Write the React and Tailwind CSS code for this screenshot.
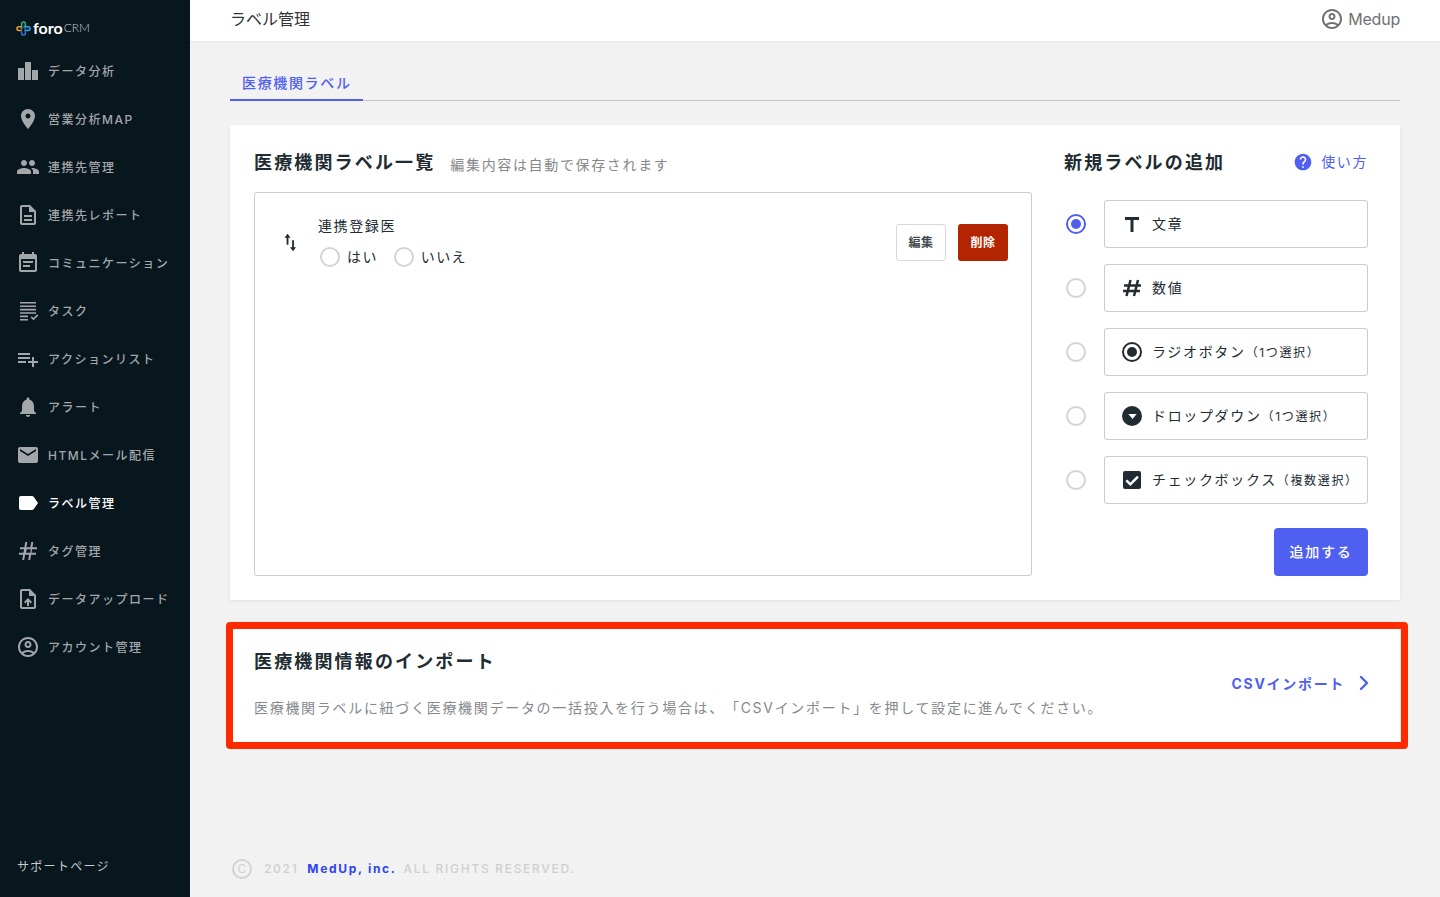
import { ChevronRight } from 'lucide-react';

const icons = {
  place: 'M12 2C8.13 2 5 5.13 5 9c0 5.25 7 13 7 13s7-7.75 7-13c0-3.87-3.13-7-7-7zm0 9.5c-1.38 0-2.5-1.12-2.5-2.5s1.12-2.5 2.5-2.5 2.5 1.12 2.5 2.5-1.12 2.5-2.5 2.5z',
  people: 'M16 11c1.66 0 2.99-1.34 2.99-3S17.66 5 16 5c-1.66 0-3 1.34-3 3s1.34 3 3 3zm-8 0c1.66 0 2.99-1.34 2.99-3S9.66 5 8 5C6.34 5 5 6.34 5 8s1.34 3 3 3zm0 2c-2.33 0-7 1.17-7 3.5V19h14v-2.5c0-2.33-4.67-3.5-7-3.5zm8 0c-.29 0-.62.02-.97.05 1.16.84 1.97 1.97 1.97 3.45V19h6v-2.5c0-2.33-4.67-3.5-7-3.5z',
  report: 'M8 16h8v2H8zm0-4h8v2H8zm6-10H6c-1.1 0-2 .9-2 2v16c0 1.1.89 2 1.99 2H18c1.1 0 2-.9 2-2V8l-6-6zm4 18H6V4h7v5h5v11z',
  event: 'M17 10H7v2h10v-2zm2-7h-1V1h-2v2H8V1H6v2H5c-1.11 0-1.99.9-1.99 2L3 19c0 1.1.89 2 2 2h14c1.1 0 2-.9 2-2V5c0-1.1-.9-2-2-2zm0 16H5V8h14v11zm-5-5H7v2h7v-2z',
  chart: 'M2 9h6v12H2zM9 3h6v18H9zM16 11h6v10h-6z',
  task: 'M4 3h16v1.6H4zM4 6.4h16V8H4zM4 9.8h16v1.6H4zM4 13.2h16v1.6H4zM4 16.6h8v1.6H4zM4 20h8v1.6H4zM14.6 18.4l1.2-1.2 1.7 1.7 3.6-3.6 1.2 1.2-4.8 4.8z',
  playlist: 'M14 10H2v2h12v-2zm0-4H2v2h12V6zm4 8v-4h-2v4h-4v2h4v4h2v-4h4v-2h-4zM2 16h8v-2H2v2z',
  bell: 'M12 22c1.1 0 2-.9 2-2h-4c0 1.1.89 2 2 2zm6-6v-5c0-3.07-1.64-5.64-4.5-6.32V4c0-.83-.67-1.5-1.5-1.5s-1.5.67-1.5 1.5v.68C7.63 5.36 6 7.92 6 11v5l-2 2v1h16v-1l-2-2z',
  mail: 'M20 4H4c-1.1 0-1.99.9-1.99 2L2 18c0 1.1.9 2 2 2h16c1.1 0 2-.9 2-2V6c0-1.1-.9-2-2-2zm0 4l-8 5-8-5V6l8 5 8-5v2z',
  label: 'M17.63 5.84C17.27 5.33 16.67 5 16 5L5 5.01C3.9 5.01 3 5.9 3 7v10c0 1.1.9 1.99 2 1.99L16 19c.67 0 1.27-.33 1.63-.84L22 12l-4.37-6.16z',
  tag: 'M9.3 3h2l-.9 5.2h4L15.3 3h2l-.9 5.2H21v2h-4.9l-.7 3.6H20v2h-4.9L14.2 21h-2l.9-5.2h-4L8.2 21h-2l.9-5.2H3v-2h4.4l.7-3.6H4v-2h4.4z M10.8 10.2l-.7 3.6h4l.7-3.6z',
  upload: 'M14 2H6c-1.1 0-1.99.9-1.99 2L4 20c0 1.1.89 2 1.99 2H18c1.1 0 2-.9 2-2V8l-6-6zm4 18H6V4h7v5h5v11zM8 15.01l1.41 1.41L11 14.84V19h2v-4.16l1.59 1.59L16 15.01 12.01 11 8 15.01z',
  account: 'M12 2C6.48 2 2 6.48 2 12s4.48 10 10 10 10-4.48 10-10S17.52 2 12 2zM7.35 18.5C8.66 17.56 10.26 17 12 17s3.34.56 4.65 1.5c-1.31.94-2.91 1.5-4.65 1.5s-3.34-.56-4.65-1.5zm10.79-1.38C16.45 15.8 14.32 15 12 15s-4.45.8-6.14 2.12C4.7 15.73 4 13.95 4 12c0-4.42 3.58-8 8-8s8 3.58 8 8c0 1.95-.7 3.73-1.86 5.12zM12 6c-1.93 0-3.5 1.57-3.5 3.5S10.07 13 12 13s3.5-1.57 3.5-3.5S13.93 6 12 6zm0 5c-.83 0-1.5-.67-1.5-1.5S11.17 8 12 8s1.5.67 1.5 1.5S12.83 11 12 11z',
  help: 'M12 2C6.48 2 2 6.48 2 12s4.48 10 10 10 10-4.48 10-10S17.52 2 12 2zm1 17h-2v-2h2v2zm2.07-7.75l-.9.92C13.45 12.9 13 13.5 13 15h-2v-.5c0-1.1.45-2.1 1.17-2.83l1.24-1.26c.37-.36.59-.86.59-1.41 0-1.1-.9-2-2-2s-2 .9-2 2H8c0-2.21 1.79-4 4-4s4 1.79 4 4c0 .88-.36 1.68-.93 2.25z',
};

const navItems = [
  { label: 'データ分析', icon: 'chart' },
  { label: '営業分析MAP', icon: 'place' },
  { label: '連携先管理', icon: 'people' },
  { label: '連携先レポート', icon: 'report' },
  { label: 'コミュニケーション', icon: 'event' },
  { label: 'タスク', icon: 'task' },
  { label: 'アクションリスト', icon: 'playlist' },
  { label: 'アラート', icon: 'bell' },
  { label: 'HTMLメール配信', icon: 'mail' },
  { label: 'ラベル管理', icon: 'label', active: true },
  { label: 'タグ管理', icon: 'tag' },
  { label: 'データアップロード', icon: 'upload' },
  { label: 'アカウント管理', icon: 'account' },
];

function Icon({ name, className }) {
  return (
    <svg viewBox="0 0 24 24" fill="currentColor" fillRule="evenodd" className={className}>
      <path d={icons[name]} />
    </svg>
  );
}

function Logo() {
  return (
    <div className="flex items-center h-[16px]">
      <svg viewBox="0 0 16 16" fill="none" strokeWidth="1.6" className="w-[15px] h-[15px] shrink-0">
        <path d="M6.5 6H3a2 2 0 0 0 0 4h3" stroke="#f39a2d" />
        <path d="M6 9V3a2 2 0 0 1 4 0v3" stroke="#3fb27f" />
        <path d="M8 6h5a2 2 0 0 1 0 4H9" stroke="#2aa6df" />
        <path d="M10 7v6a2 2 0 0 1-4 0v-2" stroke="#2f6fd6" />
      </svg>
      <span className="ml-[2px] text-[16px] leading-none font-bold text-white font-['Lato',sans-serif]">foro</span>
      <span className="ml-[1px] text-[12px] leading-none font-light text-[#c9cdd0] font-['Lato',sans-serif]">CRM</span>
    </div>
  );
}

function Sidebar() {
  return (
    <aside className="w-[190px] shrink-0 bg-[#08161e] flex flex-col h-full">
      <div className="h-[47px] pl-[16px] pt-[20px]">
        <Logo />
      </div>
      <nav>
        {navItems.map((item) => (
          <div
            key={item.label}
            className={`h-12 pl-[16px] flex items-center gap-[8px] text-[12px] tracking-[1.5px] font-medium ${
              item.active ? 'text-white' : 'text-[#a3a7aa]'
            }`}
          >
            <Icon name={item.icon} className="w-6 h-6 shrink-0" />
            <span className="pt-[2px]">{item.label}</span>
          </div>
        ))}
      </nav>
      <div className="mt-auto pl-[17px] pb-[21px] text-[12px] leading-[18px] tracking-[1.3px] text-[#c9cdd0]">
        サポートページ
      </div>
    </aside>
  );
}

function Radio({ checked }) {
  return (
    <span
      className={`w-5 h-5 rounded-full border-2 shrink-0 flex items-center justify-center bg-white ${
        checked ? 'border-[#4f5ff0]' : 'border-[#d0d5d5]'
      }`}
    >
      {checked && <span className="w-[10px] h-[10px] rounded-full bg-[#4f5ff0]" />}
    </span>
  );
}

const typeIcons = {
  text: (
    <svg viewBox="0 0 24 24" fill="#212c32" className="w-6 h-6">
      <path d="M5 5h14v3h-5.5v12h-3V8H5z" />
    </svg>
  ),
  number: (
    <svg viewBox="0 0 24 24" fill="none" stroke="#212c32" strokeWidth="2.5" className="w-6 h-6">
      <path d="M10.5 4 6.5 20M18 4l-4 16M4 9.5h17M3 15h17" />
    </svg>
  ),
  radio: (
    <span className="w-5 h-5 rounded-full border-2 border-[#212c32] flex items-center justify-center">
      <span className="w-[10px] h-[10px] rounded-full bg-[#212c32]" />
    </span>
  ),
  dropdown: (
    <span className="w-5 h-5 rounded-full bg-[#212c32] flex items-center justify-center">
      <svg viewBox="0 0 10 6" fill="white" className="w-[9px] h-[5px]">
        <path d="M0 0h10L5 6z" />
      </svg>
    </span>
  ),
  checkbox: (
    <span className="w-[18px] h-[18px] rounded-[2px] bg-[#212c32] flex items-center justify-center">
      <svg viewBox="0 0 24 24" fill="none" stroke="white" strokeWidth="3.8" className="w-[16px] h-[16px]">
        <path d="M3.5 12.5 9.5 18.5 21 7" />
      </svg>
    </span>
  ),
};

const labelTypes = [
  { type: 'text', label: '文章', checked: true },
  { type: 'number', label: '数値' },
  { type: 'radio', label: 'ラジオボタン', note: '（1つ選択）' },
  { type: 'dropdown', label: 'ドロップダウン', note: '（1つ選択）' },
  { type: 'checkbox', label: 'チェックボックス', note: '（複数選択）' },
];

function NewLabelPanel() {
  return (
    <div className="w-[304px] shrink-0 flex flex-col">
      <div className="h-[24px] flex items-center justify-between">
        <h2 className="text-[18px] leading-[24px] font-bold tracking-[2.15px] text-[#212c32]">新規ラベルの追加</h2>
        <div className="flex items-center gap-[8px] text-[14px] tracking-[1.6px] text-[#4f5ff0] -mt-[3px]">
          <Icon name="help" className="w-5 h-5" />
          使い方
        </div>
      </div>
      <div className="mt-[25px] flex flex-col gap-4">
        {labelTypes.map((t) => (
          <div key={t.type} className="flex items-center">
            <span className="w-[40px] pl-[2px] shrink-0">
              <Radio checked={t.checked} />
            </span>
            <div className="flex-1 h-12 border border-[#ccc] rounded-[3px] pl-[15px] flex items-center gap-[8px] text-[14px] tracking-[1.65px] text-[#212c32]">
              <span className="w-6 h-6 flex items-center justify-center shrink-0">{typeIcons[t.type]}</span>
              <span className="pb-[2px]">
                {t.label}
                {t.note && <span className="text-[12px]">{t.note}</span>}
              </span>
            </div>
          </div>
        ))}
      </div>
      <div className="mt-6 flex justify-end">
        <button className="w-[94px] h-12 pb-[2px] rounded-[4px] bg-[#4f5ff0] text-white text-[14px] font-medium tracking-[1.7px]">
          追加する
        </button>
      </div>
    </div>
  );
}

function LabelRow() {
  return (
    <div className="flex items-start pt-[31px] pl-[24px] pr-[23px]">
      <svg viewBox="0 0 24 24" fill="#212c32" className="w-[22px] h-[22px] mt-[7px] shrink-0">
        <path d="M9.3 3l-3.3 4.4h2.3V15h2V7.4h2.3zM15.3 22l3.3-4.4h-2.3V10h-2v7.6H12z" />
      </svg>
      <div className="ml-[17px] flex-1 -mt-[8px]">
        <div className="text-[14px] leading-[20px] tracking-[1.6px] text-[#212c32]">連携登録医</div>
        <div className="mt-[10px] flex items-center text-[14px] tracking-[1.4px] text-[#212c32] ml-[2px]">
          <Radio />
          <span className="ml-[7px]">はい</span>
          <span className="ml-[16px]"><Radio /></span>
          <span className="ml-[7px]">いいえ</span>
        </div>
      </div>
      <div className="flex gap-3">
        <button className="w-[50px] h-[37px] rounded-[3px] border border-[#d8d8d8] bg-white text-[12px] font-bold tracking-[0.05em] text-[#42494e]">
          編集
        </button>
        <button className="w-[50px] h-[37px] rounded-[3px] bg-[#b32400] text-white text-[12px] font-bold tracking-[0.05em]">
          削除
        </button>
      </div>
    </div>
  );
}

function ImportCard() {
  return (
    <section className="relative mt-6 bg-white h-[120px] px-6 pt-[26px] flex justify-between shadow-[0_1px_3px_rgba(0,0,0,0.08)]">
      <div>
        <h2 className="text-[18px] leading-[24px] font-bold tracking-[2.15px] text-[#212c32]">医療機関情報のインポート</h2>
        <p className="mt-[24px] text-[14px] leading-[20px] tracking-[1.7px] text-[#85898c]">
          医療機関ラベルに紐づく医療機関データの一括投入を行う場合は、「CSVインポート」を押して設定に進んでください。
        </p>
      </div>
      <div className="flex items-center h-[66px] text-[14px] font-bold tracking-[0.12em] text-[#4f5ff0]">
        CSVインポート
        <ChevronRight className="w-6 h-6 ml-[7px]" strokeWidth={2.4} />
      </div>
      {/* annotation frame over the card */}
      <div className="absolute -left-[4px] -right-[8px] -top-[2px] -bottom-[5px] border-[7px] border-[#ff2a00] rounded-[4px] pointer-events-none" />
    </section>
  );
}

export default function App() {
  return (
    <div className="flex h-screen overflow-hidden bg-[#f2f2f2] text-[#212c32] [text-spacing-trim:space-all] font-['Inter','Noto_Sans_CJK_JP',sans-serif]">
      <Sidebar />
      <div className="flex-1 min-w-0 flex flex-col">
        <header className="h-[41px] shrink-0 bg-white pl-[40px] pr-[40px] flex items-center justify-between shadow-[0_1px_2px_rgba(0,0,0,0.05)]">
          <h1 className="text-[16px] text-[#333] -mt-[3px]">ラベル管理</h1>
          <div className="flex items-center gap-[4px] text-[16px] tracking-[-0.2px] text-[#707070] -mt-[3px]">
            <Icon name="account" className="w-6 h-6" />
            Medup
          </div>
        </header>
        <main className="flex-1 flex flex-col px-[40px]">
          <div className="mt-[24px] border-b border-[#c8c8c8] h-[36px]">
            <div className="inline-flex items-center h-[36px] pl-3 pr-[11px] border-b-2 border-[#4f5ff0] text-[14px] font-medium tracking-[1.65px] text-[#4f5ff0]">
              医療機関ラベル
            </div>
          </div>
          <section className="mt-6 h-[475px] bg-white pl-6 pr-[32px] pt-[26px] flex gap-[32px] shadow-[0_1px_3px_rgba(0,0,0,0.08)]">
            <div className="flex-1 min-w-0">
              <div className="h-[24px] flex items-center">
                <h2 className="text-[18px] leading-[24px] font-bold tracking-[2.15px] text-[#212c32]">医療機関ラベル一覧</h2>
                <span className="ml-[15px] mt-[2px] text-[14px] tracking-[1.65px] text-[#85898c]">編集内容は自動で保存されます</span>
              </div>
              <div className="mt-[17px] h-[384px] border border-[#ccc] rounded-[3px]">
                <LabelRow />
              </div>
            </div>
            <NewLabelPanel />
          </section>
          <ImportCard />
          <footer className="mt-auto pb-[18px] flex items-center text-[12px] font-medium tracking-[1.7px] text-[#cfcfcf]">
            <span className="ml-[2px] w-5 h-5 rounded-full border-2 border-[#d2d2d2] flex items-center justify-center text-[12px] leading-none tracking-normal font-normal">C</span>
            <span className="ml-[12px]">2021</span>
            <span className="ml-[9px] font-bold text-[#2b45f0]">MedUp, inc.</span>
            <span className="ml-[7px]">ALL RIGHTS RESERVED.</span>
          </footer>
        </main>
      </div>
    </div>
  );
}
